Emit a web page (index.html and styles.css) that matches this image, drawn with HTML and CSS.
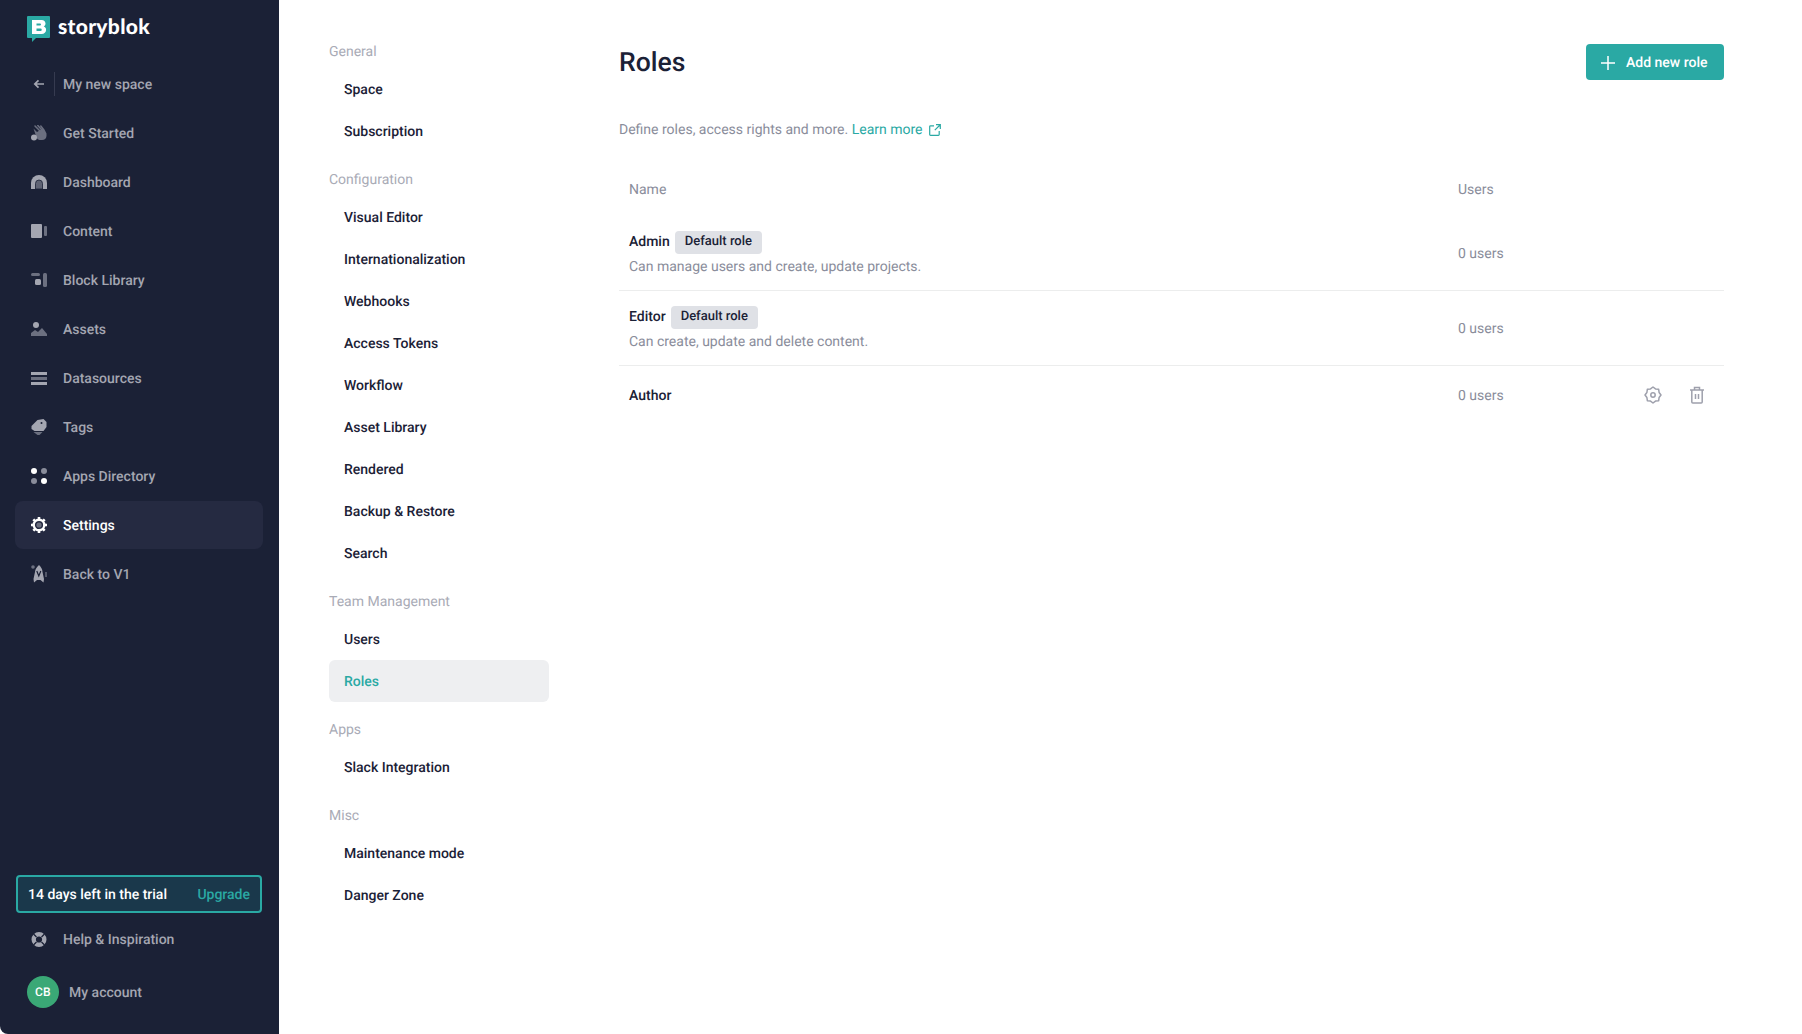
FILE: index.html
```html
<!DOCTYPE html>
<html lang="en">
<head>
<meta charset="utf-8">
<title>Roles</title>
<link rel="stylesheet" href="styles.css">
</head>
<body>
<div class="app">
  <aside class="sidebar">
    <div class="side-top">
      <div class="logo">
        <svg class="logo-mark" width="23" height="27" viewBox="0 0 23 27"><path d="M1 0h21a1 1 0 0 1 1 1v20a1 1 0 0 1-1 1H9l-4 4v-4H1a1 1 0 0 1-1-1V1a1 1 0 0 1 1-1z" fill="#2aa9a4"/><path d="M5 4h9.500c2.500 0 4 1.500 4 3.600 0 1.400-.7 2.400-1.700 2.900 1.400.5 2.300 1.600 2.300 3.200 0 2.500-1.800 4.300-4.600 4.300H5z" fill="#fff"/><path d="M9.500 7.500v2h3.500a1 1 0 0 0 0-2zM9.500 12.500v2.500h4a1.250 1.250 0 0 0 0-2.500z" fill="#2aa9a4"/></svg>
        <span class="logo-text">storyblok</span>
      </div>
      <nav class="side-nav">
        <a class="side-item back">
          <span class="back-arrow"><svg width="12" height="10" viewBox="0 0 12 10"><path d="M11 5H2M5.500 1.300L1.800 5l3.700 3.700" fill="none" stroke="#a4a6b1" stroke-width="1.700"/></svg></span>
          <span class="back-sep"></span>
          <span class="side-label">My new space</span>
        </a>
        <a class="side-item">
          <svg class="side-icon" width="16" height="16" viewBox="0 0 16 16"><path d="M4 1l4.500 4.500M6.800.5l3.600 4M9.800 1l2.700 3.500" stroke="#6c7080" stroke-width="1.500" stroke-linecap="round" fill="none"/><path d="M2.500 3.500L6 7l5-3 2.500.5 2 4V11a4.500 4.500 0 0 1-4.500 4H8.500a4 4 0 0 1-3-2.500z" fill="#6c7080"/><circle cx="3" cy="12.500" r="3" fill="#a4a6b1"/></svg>
          <span class="side-label">Get Started</span>
        </a>
        <a class="side-item">
          <svg class="side-icon" width="16" height="14" viewBox="0 0 16 14"><path d="M0 14V8a8 8 0 0 1 16 0v6z" fill="#a4a6b1"/><path d="M4.500 14V8.500a3.500 3.500 0 0 1 7 0V14z" fill="#5f6374" stroke="#1b2136" stroke-width=".8"/></svg>
          <span class="side-label">Dashboard</span>
        </a>
        <a class="side-item">
          <svg class="side-icon" width="16" height="14" viewBox="0 0 16 14"><rect width="11" height="14" rx="1" fill="#a4a6b1"/><rect x="13" y="2" width="3" height="10" rx="1" fill="#6c7080"/></svg>
          <span class="side-label">Content</span>
        </a>
        <a class="side-item">
          <svg class="side-icon" width="16" height="14" viewBox="0 0 16 14"><rect width="9" height="3" rx="1.500" fill="#6c7080"/><rect x="4" y="6" width="6" height="6" rx="1.500" fill="#a4a6b1"/><rect x="12" y="0" width="4" height="14" rx="1.500" fill="#6c7080"/></svg>
          <span class="side-label">Block Library</span>
        </a>
        <a class="side-item">
          <svg class="side-icon" width="16" height="14" viewBox="0 0 16 14"><circle cx="5" cy="3" r="3" fill="#a4a6b1"/><path d="M0 14v-3l4-3 3 2 4-4 5 6v2z" fill="#6c7080"/></svg>
          <span class="side-label">Assets</span>
        </a>
        <a class="side-item">
          <svg class="side-icon" width="16" height="13" viewBox="0 0 16 13"><rect width="16" height="3" fill="#a4a6b1"/><rect y="5" width="16" height="3" fill="#6c7080"/><rect y="10" width="16" height="3" fill="#a4a6b1"/></svg>
          <span class="side-label">Datasources</span>
        </a>
        <a class="side-item">
          <svg class="side-icon" width="15" height="17" viewBox="0 0 15 17"><path d="M6 1l6-1 3 3v5l-3 4H3l-3-2V7z" fill="#a4a6b1"/><circle cx="10" cy="4" r="1" fill="#1b2136"/><path d="M2 13h9l-3 3H6z" fill="#6c7080"/></svg>
          <span class="side-label">Tags</span>
        </a>
        <a class="side-item">
          <svg class="side-icon" width="16" height="16" viewBox="0 0 16 16"><circle cx="3" cy="3" r="3" fill="#fff"/><circle cx="13" cy="3" r="3" fill="#8a8d9b"/><circle cx="3" cy="13" r="3" fill="#8a8d9b"/><circle cx="13" cy="13" r="3" fill="#fff"/></svg>
          <span class="side-label">Apps Directory</span>
        </a>
        <a class="side-item active">
          <svg class="side-icon" width="16" height="16" viewBox="0 0 16 16"><circle cx="8" cy="8" r="5.300" fill="none" stroke="#fff" stroke-width="2.400"/><path d="M8 0v16M0 8h16M2.300 2.300l11.400 11.400M13.700 2.300L2.300 13.700" stroke="#fff" stroke-width="2.600" stroke-dasharray="3 10 3 0"/><circle cx="8" cy="8" r="2.600" fill="#6c7080"/></svg>
          <span class="side-label">Settings</span>
        </a>
        <a class="side-item">
          <svg class="side-icon" width="16" height="18" viewBox="0 0 16 18"><circle cx="2" cy="2" r="1.800" fill="#6c7080"/><path d="M8 0c2 2 3.500 4 3.500 7l1.500 7-.5 3.500-3-2.500H6l-3 2.500L2.500 14 4 7c0-3 2-5 4-7z" fill="#a4a6b1"/><path d="M5.800 6l2 5 2-5" fill="none" stroke="#1b2136" stroke-width="1.200"/><path d="M15 7v5" stroke="#8a8d9b"/></svg>
          <span class="side-label">Back to V1</span>
        </a>
      </nav>
    </div>
    <div class="side-bottom">
      <div class="trial"><span>14 days left in the trial</span><span class="upgrade">Upgrade</span></div>
      <a class="side-item help">
        <svg class="side-icon" width="15" height="15" viewBox="0 0 15 15"><circle cx="7.500" cy="7.500" r="5.300" fill="none" stroke="#a4a6b1" stroke-width="4.400"/><path d="M2 2l3 3M13 2l-3 3M2 13l3-3M13 13l-3-3" stroke="#1b2136" stroke-width="1.300"/></svg>
        <span class="side-label">Help &amp; Inspiration</span>
      </a>
      <div class="account">
        <span class="avatar">CB</span>
        <span class="side-label">My account</span>
      </div>
    </div>
  </aside>

  <nav class="settings-nav">
    <h4 class="group">General</h4>
    <a class="set-item">Space</a>
    <a class="set-item">Subscription</a>
    <h4 class="group">Configuration</h4>
    <a class="set-item">Visual Editor</a>
    <a class="set-item">Internationalization</a>
    <a class="set-item">Webhooks</a>
    <a class="set-item">Access Tokens</a>
    <a class="set-item">Workflow</a>
    <a class="set-item">Asset Library</a>
    <a class="set-item">Rendered</a>
    <a class="set-item">Backup &amp; Restore</a>
    <a class="set-item">Search</a>
    <h4 class="group">Team Management</h4>
    <a class="set-item">Users</a>
    <a class="set-item current">Roles</a>
    <h4 class="group">Apps</h4>
    <a class="set-item">Slack Integration</a>
    <h4 class="group">Misc</h4>
    <a class="set-item">Maintenance mode</a>
    <a class="set-item">Danger Zone</a>
  </nav>

  <main class="main">
    <header class="head">
      <h1>Roles</h1>
      <button class="add-btn">
        <svg width="14" height="14" viewBox="0 0 14 14"><path d="M7 0v14M0 7h14" stroke="#fff" stroke-width="1.500"/></svg>
        Add new role
      </button>
    </header>
    <p class="intro">Define roles, access rights and more. <a class="learn">Learn more</a>
      <svg class="ext" width="12" height="12" viewBox="0 0 12 12"><path d="M5 1.800H1.500a.8.800 0 0 0-.8.800v7.900c0 .4.400.8.800.8h7.900a.8.800 0 0 0 .8-.8V7M7 .7h4.300V5M11 1L5.800 6.200" fill="none" stroke="#2aa9a4" stroke-width="1.200"/></svg>
    </p>
    <div class="table">
      <div class="row header">
        <div class="col-name">Name</div>
        <div class="col-users">Users</div>
        <div class="col-actions"></div>
      </div>
      <div class="row role">
        <div class="col-name">
          <div class="role-title"><span>Admin</span><span class="badge">Default role</span></div>
          <div class="role-desc">Can manage users and create, update projects.</div>
        </div>
        <div class="col-users">0 users</div>
        <div class="col-actions"></div>
      </div>
      <div class="row role">
        <div class="col-name">
          <div class="role-title"><span>Editor</span><span class="badge">Default role</span></div>
          <div class="role-desc">Can create, update and delete content.</div>
        </div>
        <div class="col-users">0 users</div>
        <div class="col-actions"></div>
      </div>
      <div class="row role last">
        <div class="col-name"><div class="role-title"><span>Author</span></div></div>
        <div class="col-users">0 users</div>
        <div class="col-actions">
          <svg width="18" height="18" viewBox="0 0 18 18"><polygon points="17,9 15.100,11.500 14.660,14.660 11.500,15.100 9,17 6.500,15.100 3.340,14.660 2.900,11.500 1,9 2.900,6.500 3.340,3.340 6.500,2.900 9,1 11.500,2.900 14.660,3.340 15.100,6.500" fill="none" stroke="#9ea0ac" stroke-width="1.500" stroke-linejoin="round"/><circle cx="9" cy="9" r="2.200" fill="none" stroke="#9ea0ac" stroke-width="1.500"/></svg>
          <svg width="16" height="18" viewBox="0 0 16 18"><path d="M1 4h14M5.500 4V1.500h5V4M2.800 4v12c0 .6.400 1 1 1h8.400c.6 0 1-.4 1-1V4M6.500 8v5M9.500 8v5" fill="none" stroke="#9ea0ac" stroke-width="1.500"/></svg>
        </div>
      </div>
    </div>
  </main>
</div>
</body>
</html>
```
FILE: styles.css
```css
* { box-sizing: border-box; }
html, body { margin: 0; height: 100%; }
body {
  font-family: Roboto, "Liberation Sans", sans-serif;
  font-size: 14px;
  text-rendering: geometricPrecision;
  color: #1b2136;
  background: #fff;
}
.app { display: flex; height: 1034px; overflow: hidden; }

.sidebar {
  width: 279px;
  flex: none;
  background: #1b2136;
  border-bottom-left-radius: 8px;
  display: flex;
  flex-direction: column;
  justify-content: space-between;
  padding: 0 16px 0 15px;
}
.logo { display: flex; align-items: flex-start; gap: 8px; padding: 16px 0 0 12px; height: 60px; }
.logo-text {
  font-family: Lato, sans-serif;
  font-weight: 900;
  font-size: 21px;
  line-height: 22px;
  letter-spacing: 0.3px;
  color: #fff;
}
.side-item {
  display: flex;
  align-items: center;
  height: 48px;
  margin-bottom: 1px;
  padding-left: 16px;
  border-radius: 8px;
  color: #a4a6b1;
  font-weight: 500;
}
.side-icon { width: 16px; flex: none; margin-right: 16px; }
.side-label { white-space: nowrap; padding-top: 1px; }
.back-arrow { width: 16px; display: flex; justify-content: center; flex: none; }
.back-sep { width: 1px; height: 24px; background: #363b50; margin: 0 8px 0 7px; }
.side-item.active { background: #252a41; color: #fff; }

.trial {
  display: flex;
  justify-content: space-between;
  align-items: center;
  height: 38px;
  margin: 0 1px;
  padding: 1px 10px 0;
  border: 2px solid #2aa9a4;
  border-radius: 4px;
  background: #1a384b;
  color: #fff;
  font-weight: 500;
}
.upgrade { color: #2aa9a4; }
.side-item.help { height: 48px; margin: 2px 0 13px; }
.account { display: flex; align-items: center; gap: 10px; padding: 0 0 26px 12px; color: #a4a6b1; font-weight: 500; }
.avatar {
  width: 32px;
  height: 32px;
  border-radius: 50%;
  background: #3aa876;
  color: #fff;
  font-size: 12px;
  letter-spacing: 0.3px;
  display: flex;
  align-items: center;
  justify-content: center;
}

.settings-nav { width: 220px; flex: none; margin-left: 50px; padding-top: 42px; }
.group {
  margin: 0;
  height: 18px;
  padding-top: 1px;
  line-height: 18px;
  font-size: 14px;
  font-weight: 400;
  color: #a9abb6;
}
.set-item {
  display: flex;
  align-items: center;
  height: 42px;
  padding: 2px 0 0 15px;
  border-radius: 6px;
  font-weight: 500;
  color: #1b2136;
}
.group + .set-item { margin-top: 8px; }
.set-item + .group { margin-top: 18px; }
.set-item.current { background: #eeeff1; color: #2aa9a4; }

.main { flex: 1; margin-left: 70px; margin-right: 78px; padding-top: 44px; min-width: 0; }
.head { display: flex; justify-content: space-between; align-items: center; height: 36px; }
.head h1 { margin: 1px 0 0; font-size: 26.500px; font-weight: 500; color: #1b2136; }
.add-btn {
  display: flex;
  align-items: center;
  gap: 11px;
  width: 138px;
  height: 36px;
  padding: 1px 0 0 15px;
  border: 0;
  border-radius: 4px;
  background: #2aa9a4;
  color: #fff;
  font: 500 14px Roboto, sans-serif;
  text-rendering: geometricPrecision;
}
.intro { margin: 41px 0 0; height: 18px; line-height: 18px; color: #8a8d9b; display: flex; align-items: center; white-space: pre; }
.learn { color: #2aa9a4; }
.ext { margin-left: 6px; }

.table { margin-top: 26px; }
.row { display: flex; align-items: center; padding-left: 10px; }
.row.header { height: 51px; padding-bottom: 2px; color: #8a8d9b; }
.col-name { width: 829px; flex: none; }
.col-users { flex: 1; color: #8a8d9b; }
.col-actions { display: flex; align-items: center; gap: 27px; padding-right: 19px; margin-bottom: 2px; }
.row.role { height: 75px; border-bottom: 1px solid #eceded; }
.row.role .col-users { padding-top: 1px; }
.row.role.last { height: 60px; border-bottom: 0; }
.row.role.last .col-users { padding-top: 0; }
.role-title { display: flex; align-items: center; gap: 5px; font-weight: 500; height: 24px; }
.badge {
  display: inline-flex;
  align-items: center;
  height: 23px;
  padding: 0 10px 1px;
  border-radius: 4px;
  background: #dfe1e6;
  font-size: 13px;
  color: #1b2136;
}
.role-desc { margin-top: 4px; color: #8a8d9b; line-height: 18px; }
```
